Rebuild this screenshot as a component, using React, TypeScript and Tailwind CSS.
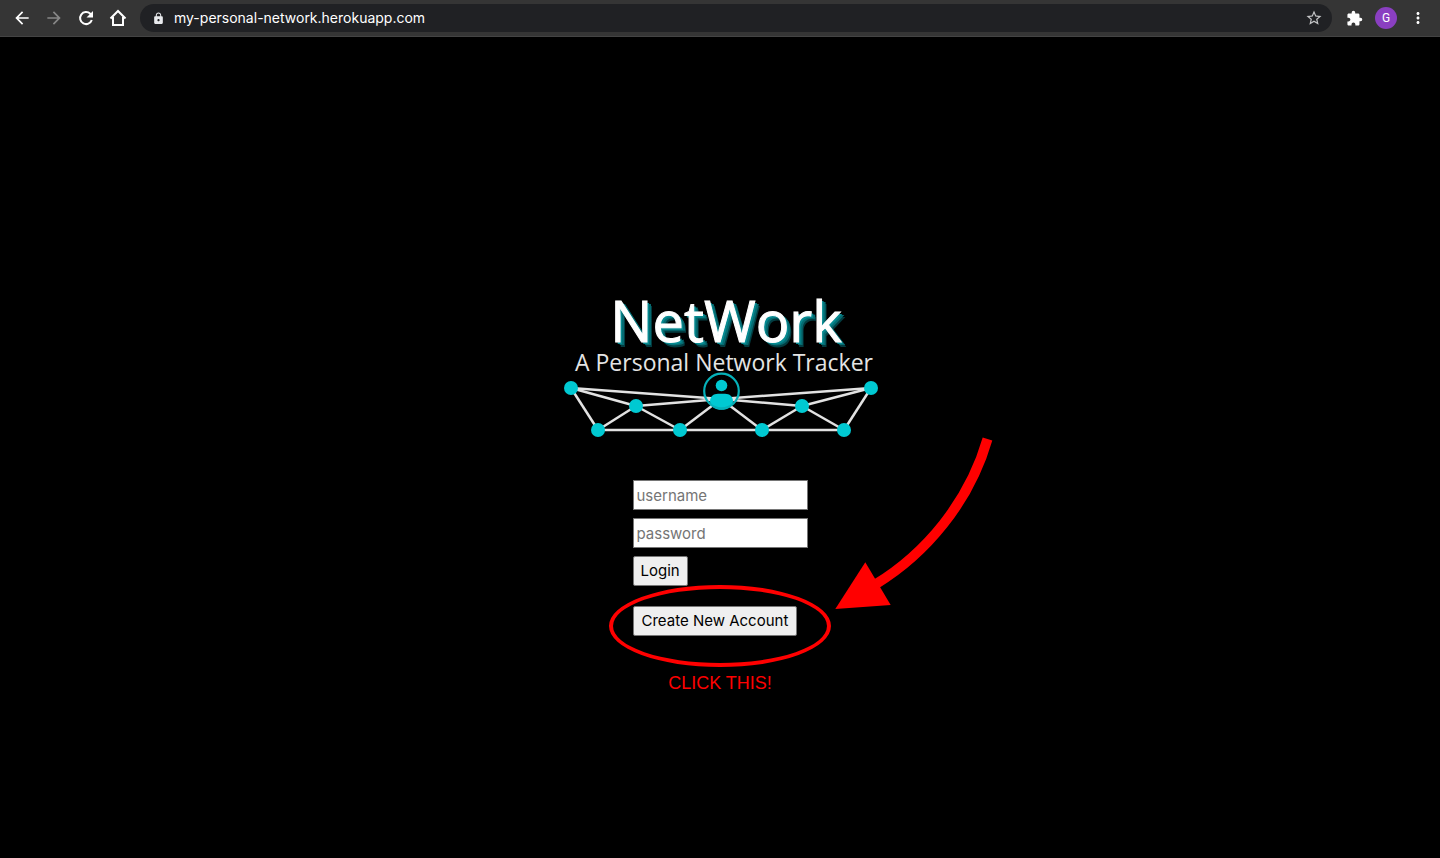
import { MdArrowBack, MdArrowForward, MdLock, MdStarBorder, MdExtension, MdMoreVert } from "react-icons/md";

const nodes: [number, number][] = [
  [571, 388], [598, 430], [636, 406], [680, 430],
  [762, 430], [802, 406], [844, 430], [871, 388],
];
const hub: [number, number] = [721, 399];
const links: [number, number][] = [
  [0, 1], [0, 2], [1, 2], [1, 3], [2, 3], [3, 4],
  [4, 5], [4, 6], [5, 6], [5, 7], [6, 7],
];
const hubLinks = [0, 2, 3, 4, 5, 7];

function BrowserBar() {
  return (
    <header className="flex h-[37px] items-center border-b border-[#444444] bg-[#353535] pr-[13px] pl-3">
      <nav className="flex items-center gap-3 text-white" aria-label="Browser">
        <button type="button" aria-label="Back"><MdArrowBack size={20} /></button>
        <button type="button" aria-label="Forward" className="text-[#878787]"><MdArrowForward size={20} /></button>
        <button type="button" aria-label="Reload">
          <svg width="20" height="20" viewBox="0 0 20 20" fill="none" stroke="currentColor" strokeWidth="2">
            <path d="M15.800 12A6 6 0 1 1 14.300 5.800L15 6.500" />
            <path d="M17 3v6.500h-6.500z" fill="currentColor" stroke="none" />
          </svg>
        </button>
        <button type="button" aria-label="Home">
          <svg width="20" height="20" viewBox="0 0 20 20" fill="none" stroke="currentColor" strokeWidth="2">
            <path d="M2.500 10.500 10 3l7.500 7.500M5 9v8h10V9" />
          </svg>
        </button>
      </nav>
      <div className="ml-3 flex h-7 flex-1 items-center rounded-full bg-[#202124] pr-[9px] pl-3">
        <MdLock size={13} className="text-[#e8eaed]" />
        <input
          aria-label="Address"
          defaultValue="my-personal-network.herokuapp.com"
          className="ml-[9px] min-w-0 flex-1 bg-transparent font-[Inter,sans-serif] text-sm text-white outline-none"
        />
        <button type="button" aria-label="Bookmark" className="text-[#c4c5c7]"><MdStarBorder size={18} /></button>
      </div>
      <div className="ml-[14px] flex items-center gap-3 text-white">
        <button type="button" aria-label="Extensions"><MdExtension size={17} /></button>
        <button type="button" aria-label="Profile" className="size-[22px] rounded-full bg-[#8a3fc1] font-[Roboto,sans-serif] text-xs">G</button>
        <button type="button" aria-label="More"><MdMoreVert size={18} /></button>
      </div>
    </header>
  );
}

function Logo() {
  return (
    <div className="w-full text-center font-['Open_Sans',sans-serif] text-white">
      <h1 className="pb-1 pl-3 text-[56px] leading-[54px] font-medium [-webkit-text-stroke:1px_white] [text-shadow:2px_2px_0_#078a91,4px_3px_0_#056b71,5px_5px_0_#033c40]">NetWork</h1>
      <p className="pl-2 text-[23px] leading-[22px] text-[#e4e4e4]">A Personal Network Tracker</p>
      <svg viewBox="562 373 316 66" className="block w-full overflow-visible" aria-hidden="true">
        <g stroke="#e2e2e2" strokeWidth="2.500">
          {links.map(([a, b]) => (
            <line key={`${a}-${b}`} x1={nodes[a][0]} y1={nodes[a][1]} x2={nodes[b][0]} y2={nodes[b][1]} />
          ))}
          {hubLinks.map((n) => (
            <line key={n} x1={nodes[n][0]} y1={nodes[n][1]} x2={hub[0]} y2={hub[1]} />
          ))}
        </g>
        <g fill="#00c9d2">
          {nodes.map(([x, y]) => <circle key={x} cx={x} cy={y} r="7" />)}
          <circle cx="721.500" cy="385.500" r="5.800" />
          <path d="M710 401.500c0-5 3.500-7.700 8-7.700h7c4.500 0 8 2.700 8 7.700 0 5-5 8.300-11.500 8.300S710 406.500 710 401.500z" />
        </g>
        <circle cx="721.500" cy="391" r="17.300" fill="none" stroke="#05b1b9" strokeWidth="2.200" />
      </svg>
    </div>
  );
}

const field = "h-[30px] w-[175px] border border-[#767676] bg-white px-[3px] text-black outline-none placeholder:text-[#757575]";
const button = "h-[30px] rounded-[2px] border border-[#767676] bg-[#efefef] text-black";

export default function App() {
  return (
    <div className="flex min-h-screen flex-col bg-black">
      <BrowserBar />
      <main className="flex flex-1 flex-col items-center pt-[256px]">
        <div className="relative flex w-[316px] flex-col items-center">
          <Logo />
          <div className="mt-[41px] flex w-[175px] flex-col items-start font-[Inter,sans-serif] text-[15px]">
            <form className="flex flex-col items-start gap-2" onSubmit={(e) => e.preventDefault()}>
              <input className={field} aria-label="username" placeholder="username" />
              <input className={field} aria-label="password" type="password" placeholder="password" />
              <button className={`${button} px-[7px]`}>Login</button>
            </form>
            <div className="relative mt-5">
              <button type="button" className={`${button} px-2`}>Create New Account</button>
              <div className="pointer-events-none absolute -top-[21px] -left-6 h-[82px] w-[222px] rounded-[50%] border-4 border-[#ff0000]" />
            </div>
          </div>
          <p className="mt-[35px] font-['Liberation_Sans',sans-serif] text-lg leading-6 text-[#ff0000]">CLICK THIS!</p>
          <svg width="160" height="176" viewBox="834 436 160 176" className="pointer-events-none absolute top-[143px] left-[272px]" aria-hidden="true">
            <path d="M987.500 439C969 503 925 554 876 584" fill="none" stroke="#ff0000" strokeWidth="10" />
            <path d="M865.300 562.300 835.300 609l55.400-4z" fill="#ff0000" />
          </svg>
        </div>
      </main>
    </div>
  );
}
